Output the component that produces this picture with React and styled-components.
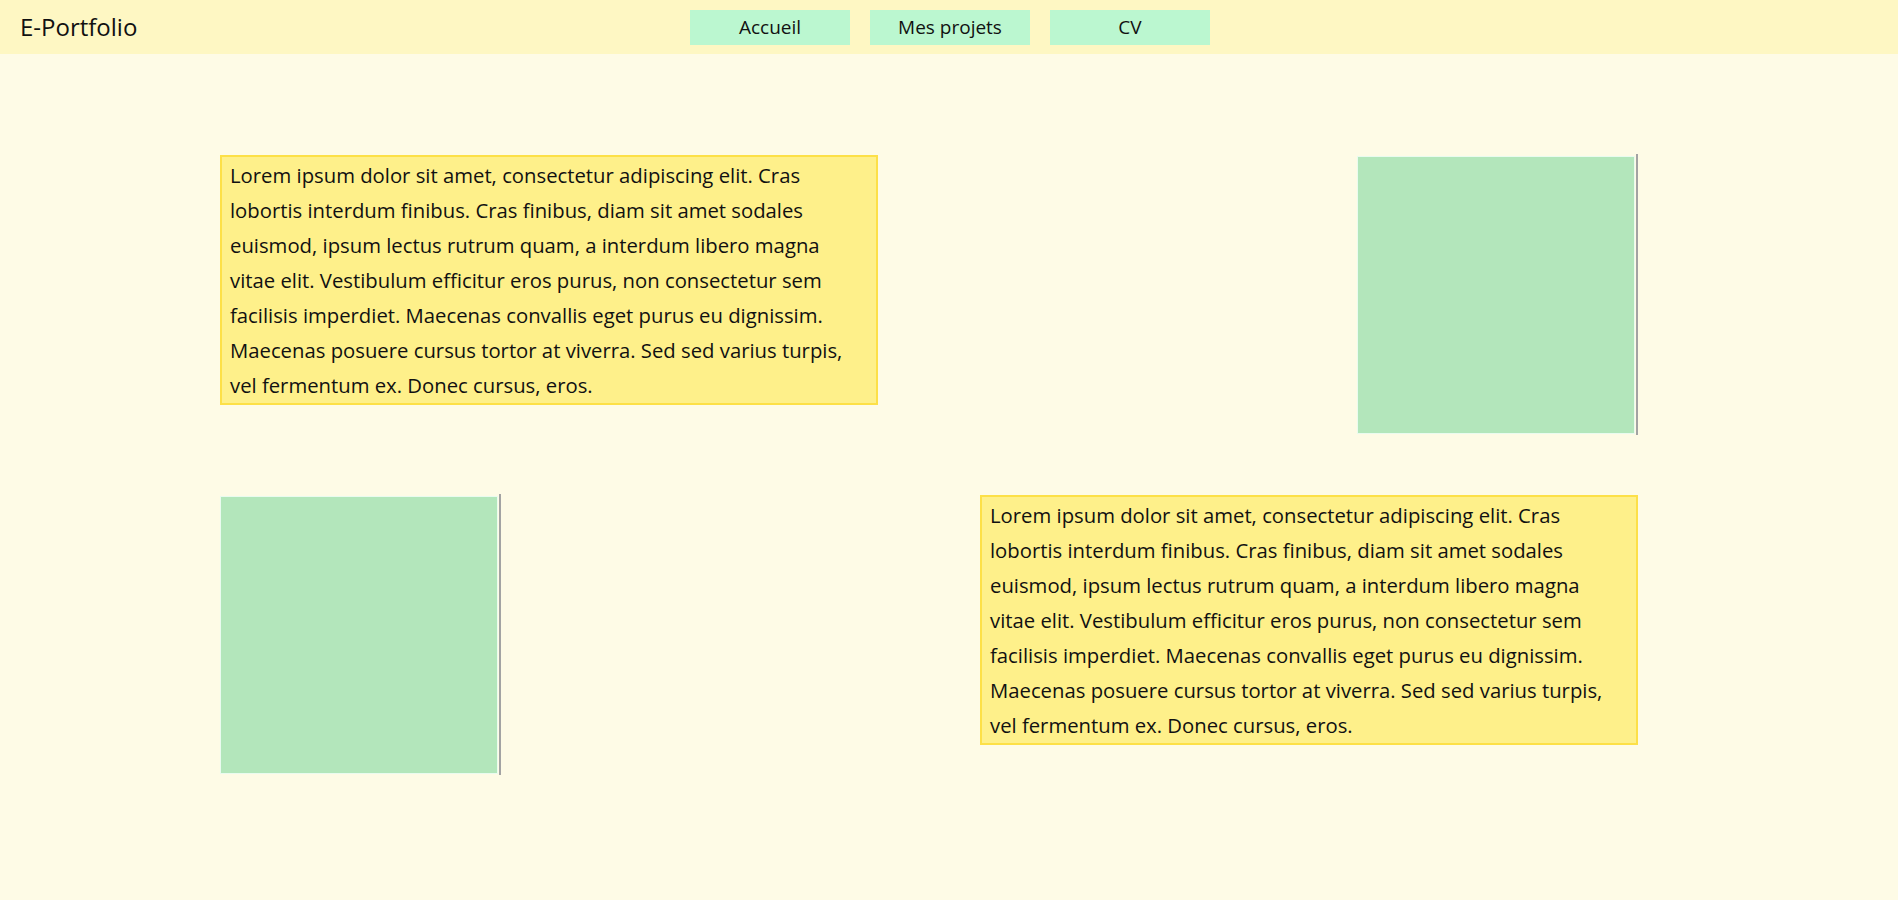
import React from 'react';
import styled, { createGlobalStyle } from 'styled-components';

const GlobalStyle = createGlobalStyle`
  html, body {
    margin: 0;
    padding: 0;
    background: #fefbe6;
    font-family: "Open Sans", "Noto Sans", sans-serif;
    color: #111;
  }
`;

const LOREM = [
  'Lorem ipsum dolor sit amet, consectetur adipiscing elit. Cras',
  'lobortis interdum finibus. Cras finibus, diam sit amet sodales',
  'euismod, ipsum lectus rutrum quam, a interdum libero magna',
  'vitae elit. Vestibulum efficitur eros purus, non consectetur sem',
  'facilisis imperdiet. Maecenas convallis eget purus eu dignissim.',
  'Maecenas posuere cursus tortor at viverra. Sed sed varius turpis,',
  'vel fermentum ex. Donec cursus, eros.',
];

const navItems = ['Accueil', 'Mes projets', 'CV'];

const App = () => {
  return (
    <>
      <GlobalStyle />
      <Header>
        <Title>E-Portfolio</Title>
        <Nav>
          {navItems.map(item => (
            <NavButton key={item}>{item}</NavButton>
          ))}
        </Nav>
      </Header>
      <Main>
        <Row>
          <TextBlock>
            {LOREM.map((line, i) => (
              <Line key={i}>{line}</Line>
            ))}
          </TextBlock>
          <ImageFrame>
            <Picture />
          </ImageFrame>
        </Row>
        <Row>
          <ImageFrame>
            <Picture />
          </ImageFrame>
          <TextBlock>
            {LOREM.map((line, i) => (
              <Line key={i}>{line}</Line>
            ))}
          </TextBlock>
        </Row>
      </Main>
    </>
  );
};

const Header = styled.header`
  display: grid;
  grid-template-columns: 670px auto 1fr;
  align-items: center;
  height: 54px;
  padding-left: 20px;
  background: #fef7c3;
`;

const Title = styled.h1`
  margin: 0;
  font-size: 24px;
  font-weight: 400;
  line-height: 1;
`;

const Nav = styled.nav`
  display: flex;
  gap: 20px;
`;

const NavButton = styled.button`
  width: 160px;
  height: 35px;
  border: none;
  padding: 0;
  background: #bbf7d0;
  font-family: inherit;
  font-size: 19px;
  color: #111;
  cursor: pointer;
`;

const Main = styled.main`
  display: flex;
  flex-direction: column;
  gap: 59px;
  padding: 100px 260px 100px 220px;
`;

const Row = styled.section`
  display: flex;
  justify-content: space-between;
  align-items: flex-start;
`;

const TextBlock = styled.div`
  width: 658px;
  box-sizing: border-box;
  margin-top: 1px;
  padding: 1px 8px 0;
  border: 2px solid #fde047;
  background: #fef08a;
  font-size: 20.3px;
  line-height: 35px;
`;

const Line = styled.div`
  white-space: nowrap;
`;

const ImageFrame = styled.div`
  display: flex;
  padding: 2px 1px 1px 0;
  border-right: 2px solid #a3a3a3;
`;

const Picture = styled.div`
  width: 276px;
  height: 276px;
  border: 1px solid #eafbef;
  background: #b3e6bb;
`;

export default App;
